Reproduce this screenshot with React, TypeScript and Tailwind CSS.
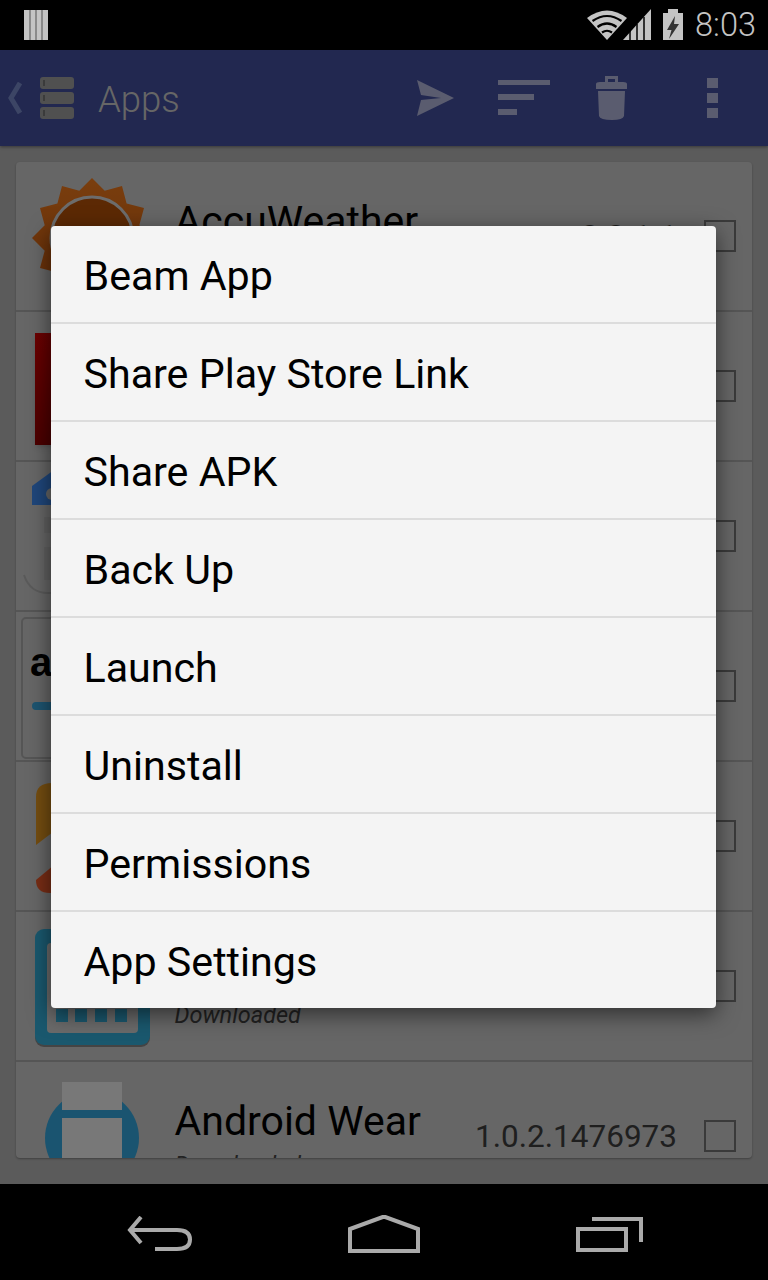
import { ReactNode } from 'react';

const menuItems = ['Beam App', 'Share Play Store Link', 'Share APK', 'Back Up', 'Launch', 'Uninstall', 'Permissions', 'App Settings'];

// 12 rays round the sun
const sunPoints = Array.from({ length: 24 }, (_, i) => {
  const r = i % 2 === 0 ? 60 : 49;
  const a = (i * 15 - 90) * (Math.PI / 180);
  return `${(60 + r * Math.cos(a)).toFixed(1)},${(60 + r * Math.sin(a)).toFixed(1)}`;
}).join(' ');

const SunIcon = () => (
  <svg width="120" height="120" viewBox="0 0 120 120" className="mt-[16px] ml-[16px]">
    <defs>
      <linearGradient id="sun" x1="0" y1="0" x2="0" y2="1">
        <stop offset="0" stopColor="#f47c1c" />
        <stop offset="1" stopColor="#c85a10" />
      </linearGradient>
    </defs>
    <polygon fill="url(#sun)" points={sunPoints} />
    <circle cx="60" cy="60" r="41" fill="#b85208" stroke="#d8d8d8" strokeWidth="3" />
  </svg>
);

const RedIcon = () => <div className="mt-[21px] ml-[19px] h-[112px] w-[90px] bg-gradient-to-br from-[#d80404] to-[#600000] shadow-md" />;

const PlayIcon = () => (
  <svg width="120" height="140" viewBox="0 0 120 140">
    <path d="M8 113 Q14 131 32 131 H70" stroke="#b4b4b4" strokeWidth="2" fill="none" />
    <path d="M16 43 V24 L38 8 H60 V43 Z" fill="#3e8cf4" />
    <circle cx="36" cy="32" r="6" fill="#cccccc" />
    <rect x="28" y="55" width="20" height="16" fill="#c0c0c0" />
    <rect x="28" y="85" width="20" height="33" fill="#c0c0c0" />
  </svg>
);

const AmazonIcon = () => (
  <div className="mt-[5px] ml-[5px] h-[142px] w-[120px] rounded-[5px] border-2 border-[#aaa] pt-[20px] pl-[7px] font-['Liberation_Sans',sans-serif] text-[40px] leading-[46px] font-bold text-black">
    a
    <div className="mt-[17px] ml-[2px] h-[8px] w-[90px] rounded-full bg-[#3aa8e0]" />
  </div>
);

const OrangeIcon = () => (
  <svg width="120" height="140" viewBox="0 0 120 140">
    <path d="M20 35 Q20 21 36 21 H70 V45 L20 83 Z" fill="#e89a20" />
    <path d="M20 118 L50 93 V131 H34 Q20 131 20 118 Z" fill="#f05a2a" />
  </svg>
);

const CalendarIcon = () => (
  <svg width="150" height="146" viewBox="0 0 150 146">
    <rect x="19" y="19" width="115" height="116" rx="9" fill="#888" />
    <rect x="19" y="17" width="115" height="116" rx="9" fill="#35b0dc" />
    <rect x="31" y="31" width="91" height="90" rx="4" fill="#d4d4d4" />
    <rect x="40" y="97" width="12" height="13" fill="#35b0dc" />
    <rect x="59" y="97" width="12" height="13" fill="#35b0dc" />
    <rect x="79" y="97" width="12" height="13" fill="#35b0dc" />
    <rect x="99" y="97" width="12" height="13" fill="#35b0dc" />
  </svg>
);

const WearIcon = () => (
  <svg width="150" height="146" viewBox="0 0 150 146">
    <circle cx="76" cy="76" r="47" fill="#35a8e0" />
    <rect x="46" y="20" width="60" height="28" fill="#f0f0f0" />
    <rect x="46" y="56" width="60" height="42" fill="#f0f0f0" />
  </svg>
);

const apps: { name: string; version: string; icon: ReactNode }[] = [
  { name: 'AccuWeather', version: '3.3.1.1', icon: <SunIcon /> },
  { name: 'Adobe Reader', version: '11.6.0', icon: <RedIcon /> },
  { name: 'Allo', version: '1.0.0', icon: <PlayIcon /> },
  { name: 'Amazon', version: '5.2.1', icon: <AmazonIcon /> },
  { name: 'Analytics', version: '2.1.0', icon: <OrangeIcon /> },
  { name: 'Android Pay', version: '1.0.0', icon: <CalendarIcon /> },
  { name: 'Android Wear', version: '1.0.2.1476973', icon: <WearIcon /> },
];

const AppRow = ({ name, version, icon, first }: { name: string; version: string; icon: ReactNode; first: boolean }) => (
  <div className={`flex shrink-0 ${first ? 'h-[148px]' : 'h-[150px] border-t-2 border-[#aaa]'}`}>
    <div className="h-full w-[158.500px] shrink-0 overflow-hidden">{icon}</div>
    <div className="min-w-0 flex-1 pt-[35px]">
      <div className="text-[41px] leading-[48px] text-black">{name}</div>
      <div className="mt-[5px] text-[23.500px] leading-[30px] text-[#444] italic">Downloaded</div>
    </div>
    <div className="flex items-start pt-[56px] pr-[16px]">
      <span className="mr-[27px] text-[31.500px] leading-[38px] text-[#3e3e3e]">{version}</span>
      <span className="mt-[2px] h-[32px] w-[32px] border-2 border-[#747474]" />
    </div>
  </div>
);

export default function App() {
  return (
    <div className="flex h-[1280px] w-[768px] flex-col overflow-hidden bg-black font-['Roboto',sans-serif]">
      {/* Status bar */}
      <div className="flex h-[50px] shrink-0 items-center justify-between pr-[12px] pl-[24px]">
        <svg width="25" height="30" viewBox="0 0 25 30">
          <path d="M0 0h24v30H0z" fill="#c4c4c4" />
          <path d="M6 0v30M12 0v30M18 0v30" stroke="#777" strokeWidth="1.5" />
        </svg>
        <div className="flex items-center">
          <svg width="96" height="32" viewBox="0 0 96 32">
            <path d="M20 31 L0 9 Q20 -6 40 9 Z" fill="#c4c4c4" />
            <path d="M5.500 12 Q20 2 34.500 12 M10.500 18 Q20 11 29.500 18 M15 23.500 Q20 20 25 23.500" stroke="#000" strokeWidth="2.2" fill="none" />
            <path d="M36 31 L64 0 V31 Z" fill="#c4c4c4" />
            <path d="M43 31V22M50 31V15M57 31V8" stroke="#000" strokeWidth="1.5" />
            <path d="M81 0h10v4h5v27H76V4h5z" fill="#c4c4c4" />
            <path d="M88 7 L80 21 H84.500 L82 30 L92 15 H87 Z" fill="#333" />
          </svg>
          <span className="ml-[12px] text-[32.500px] leading-[38px] font-light text-[#c4c4c4]">8:03</span>
        </div>
      </div>

      <div className="relative flex min-h-0 flex-1 flex-col bg-[#b6b6b6]">
        {/* Action bar */}
        <div className="flex h-[96px] shrink-0 items-center bg-[#4450a0] shadow-[0_1px_3px_rgba(0,0,0,0.4)]">
          <svg width="16" height="32" viewBox="0 0 16 32" className="ml-[7px]">
            <path d="M13 1 L4 16 L13 31" stroke="#788aca" strokeWidth="5" fill="none" />
          </svg>
          <svg width="36" height="44" viewBox="0 0 36 44" className="ml-[16px]">
            <rect x="1" y="1" width="34" height="12" rx="3" fill="#a0a0a0" />
            <rect x="1" y="16" width="34" height="12" rx="3" fill="#a0a0a0" />
            <rect x="1" y="31" width="34" height="12" rx="3" fill="#a0a0a0" />
            <path d="M5 4v6M5 19v6M5 34v6" stroke="#777" strokeWidth="2" />
          </svg>
          <span className="mt-[5px] ml-[23px] text-[36.500px] font-light text-[#ccc]">Apps</span>
          <div className="ml-auto flex items-center">
            <svg width="40" height="38" viewBox="0 0 40 38">
              <path d="M2 1 L39 19 L2 37 L6 21 L26 19 L6 16 Z" fill="#b4b8de" />
            </svg>
            <svg width="52" height="36" viewBox="0 0 52 36" className="ml-[43px]">
              <path d="M0 0h52v5H0zM0 14h36v6H0zM0 29h19v6H0z" fill="#b4b8de" />
            </svg>
            <svg width="34" height="46" viewBox="0 0 34 46" className="ml-[45px]">
              <path d="M10 8V1h13v7h-3V4h-7v4z M1 9 Q1 7 5 7 H28 Q32 7 32 9 V14 H1 Z M3 16 H30 L29 41 Q28 45 17 45 Q5 45 4 41 Z" fill="#b4b8de" />
            </svg>
            <div className="mr-[50px] ml-[78px] flex flex-col gap-[5px]">
              <span className="h-[10px] w-[11px] bg-[#b4b8de]" />
              <span className="h-[10px] w-[11px] bg-[#b4b8de]" />
              <span className="h-[10px] w-[11px] bg-[#b4b8de]" />
            </div>
          </div>
        </div>

        {/* App list */}
        <div className="min-h-0 flex-1 px-[16px] pt-[16px] pb-[26px]">
          <div className="flex h-full flex-col overflow-hidden rounded-[4px] bg-[#ccc] shadow-[0_1px_2px_rgba(0,0,0,0.3)]">
            {apps.map((app, i) => (
              <AppRow key={app.name} {...app} first={i === 0} />
            ))}
          </div>
        </div>

        {/* Dim layer */}
        <div className="absolute inset-0 bg-black/50" />

        {/* Popup menu */}
        <div className="absolute top-[176px] left-[51px] w-[665px] rounded-[4px] bg-[#f4f4f4] shadow-[0_6px_22px_rgba(0,0,0,0.55)]">
          {menuItems.map((label, i) => (
            <div
              key={label}
              className={`flex items-center pt-[6px] pl-[32.500px] text-[41.200px] text-black ${i === 0 ? 'h-[96px]' : 'h-[98px] border-t-2 border-[#dcdcdc]'}`}
            >
              {label}
            </div>
          ))}
        </div>
      </div>

      {/* Nav bar */}
      <div className="flex h-[96px] shrink-0 items-center">
        <svg width="66" height="36" viewBox="0 0 66 36" className="mt-[3px] ml-[127px]">
          <path d="M14 1 L3 14 L14 27 M3 14 H50 Q63 14 63 23.500 Q63 33 50 33 H28" stroke="#aaa" strokeWidth="4" fill="none" />
        </svg>
        <svg width="72" height="38" viewBox="0 0 72 38" className="mt-[3px] ml-[155px]">
          <path d="M2 36 V14 L36 1.500 L70 14 V36 Z" stroke="#aaa" strokeWidth="4" fill="none" />
        </svg>
        <svg width="68" height="36" viewBox="0 0 68 36" className="mt-[5px] ml-[156px]">
          <path d="M16 2 H65 V25" stroke="#aaa" strokeWidth="4" fill="none" />
          <rect x="2" y="12" width="48" height="21" stroke="#aaa" strokeWidth="4" fill="none" />
        </svg>
      </div>
    </div>
  );
}
